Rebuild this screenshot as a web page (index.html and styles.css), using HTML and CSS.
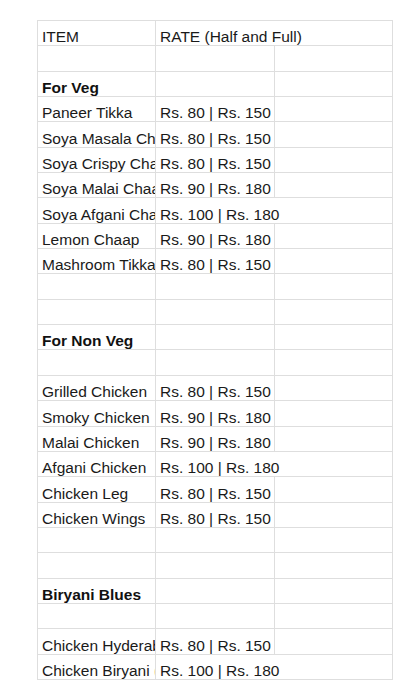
FILE: index.html
```html
<!DOCTYPE html>
<html>
<head>
<meta charset="utf-8">
<title>Menu</title>
<link rel="stylesheet" href="styles.css">
</head>
<body>
<div class="sheet">
  <div class="cell">ITEM</div><div class="cell span2">RATE (Half and Full)</div>
  <div class="cell"></div><div class="cell"></div><div class="cell"></div>
  <div class="cell bold">For Veg</div><div class="cell"></div><div class="cell"></div>
  <div class="cell">Paneer Tikka</div><div class="cell">Rs. 80 | Rs. 150</div><div class="cell"></div>
  <div class="cell">Soya Masala Chaap</div><div class="cell">Rs. 80 | Rs. 150</div><div class="cell"></div>
  <div class="cell">Soya Crispy Chaap</div><div class="cell">Rs. 80 | Rs. 150</div><div class="cell"></div>
  <div class="cell">Soya Malai Chaap</div><div class="cell">Rs. 90 | Rs. 180</div><div class="cell"></div>
  <div class="cell">Soya Afgani Chaap</div><div class="cell span2">Rs. 100 | Rs. 180</div>
  <div class="cell">Lemon Chaap</div><div class="cell">Rs. 90 | Rs. 180</div><div class="cell"></div>
  <div class="cell">Mashroom Tikka</div><div class="cell">Rs. 80 | Rs. 150</div><div class="cell"></div>
  <div class="cell"></div><div class="cell"></div><div class="cell"></div>
  <div class="cell"></div><div class="cell"></div><div class="cell"></div>
  <div class="cell bold">For Non Veg</div><div class="cell"></div><div class="cell"></div>
  <div class="cell"></div><div class="cell"></div><div class="cell"></div>
  <div class="cell">Grilled Chicken</div><div class="cell">Rs. 80 | Rs. 150</div><div class="cell"></div>
  <div class="cell">Smoky Chicken</div><div class="cell">Rs. 90 | Rs. 180</div><div class="cell"></div>
  <div class="cell">Malai Chicken</div><div class="cell">Rs. 90 | Rs. 180</div><div class="cell"></div>
  <div class="cell">Afgani Chicken</div><div class="cell span2">Rs. 100 | Rs. 180</div>
  <div class="cell">Chicken Leg</div><div class="cell">Rs. 80 | Rs. 150</div><div class="cell"></div>
  <div class="cell">Chicken Wings</div><div class="cell">Rs. 80 | Rs. 150</div><div class="cell"></div>
  <div class="cell"></div><div class="cell"></div><div class="cell"></div>
  <div class="cell"></div><div class="cell"></div><div class="cell"></div>
  <div class="cell bold">Biryani Blues</div><div class="cell"></div><div class="cell"></div>
  <div class="cell"></div><div class="cell"></div><div class="cell"></div>
  <div class="cell">Chicken Hyderabadi Biryani</div><div class="cell">Rs. 80 | Rs. 150</div><div class="cell"></div>
  <div class="cell">Chicken Biryani (Full)</div><div class="cell span2">Rs. 100 | Rs. 180</div>
</div>
</body>
</html>
```
FILE: styles.css
```css
html, body {
  margin: 0;
  background: #ffffff;
}
body {
  padding: 20px 0 0 37px;
  font-family: "Liberation Sans", Arial, sans-serif;
  font-size: 15.5px;
  color: #1a1a1a;
}
.sheet {
  display: grid;
  grid-template-columns: 117px 118px 117px;
  grid-auto-rows: 24.35px;
  gap: 1px;
  padding: 1px;
  width: 354px;
  background: #dedede;
}
.cell {
  background: #ffffff;
  display: flex;
  align-items: flex-end;
  padding: 0 0 0 4px;
  line-height: 17px;
  white-space: nowrap;
  overflow: hidden;
  min-width: 0;
}
.span2 {
  grid-column: span 2;
}
.bold {
  font-weight: bold;
  color: #111111;
}
```
